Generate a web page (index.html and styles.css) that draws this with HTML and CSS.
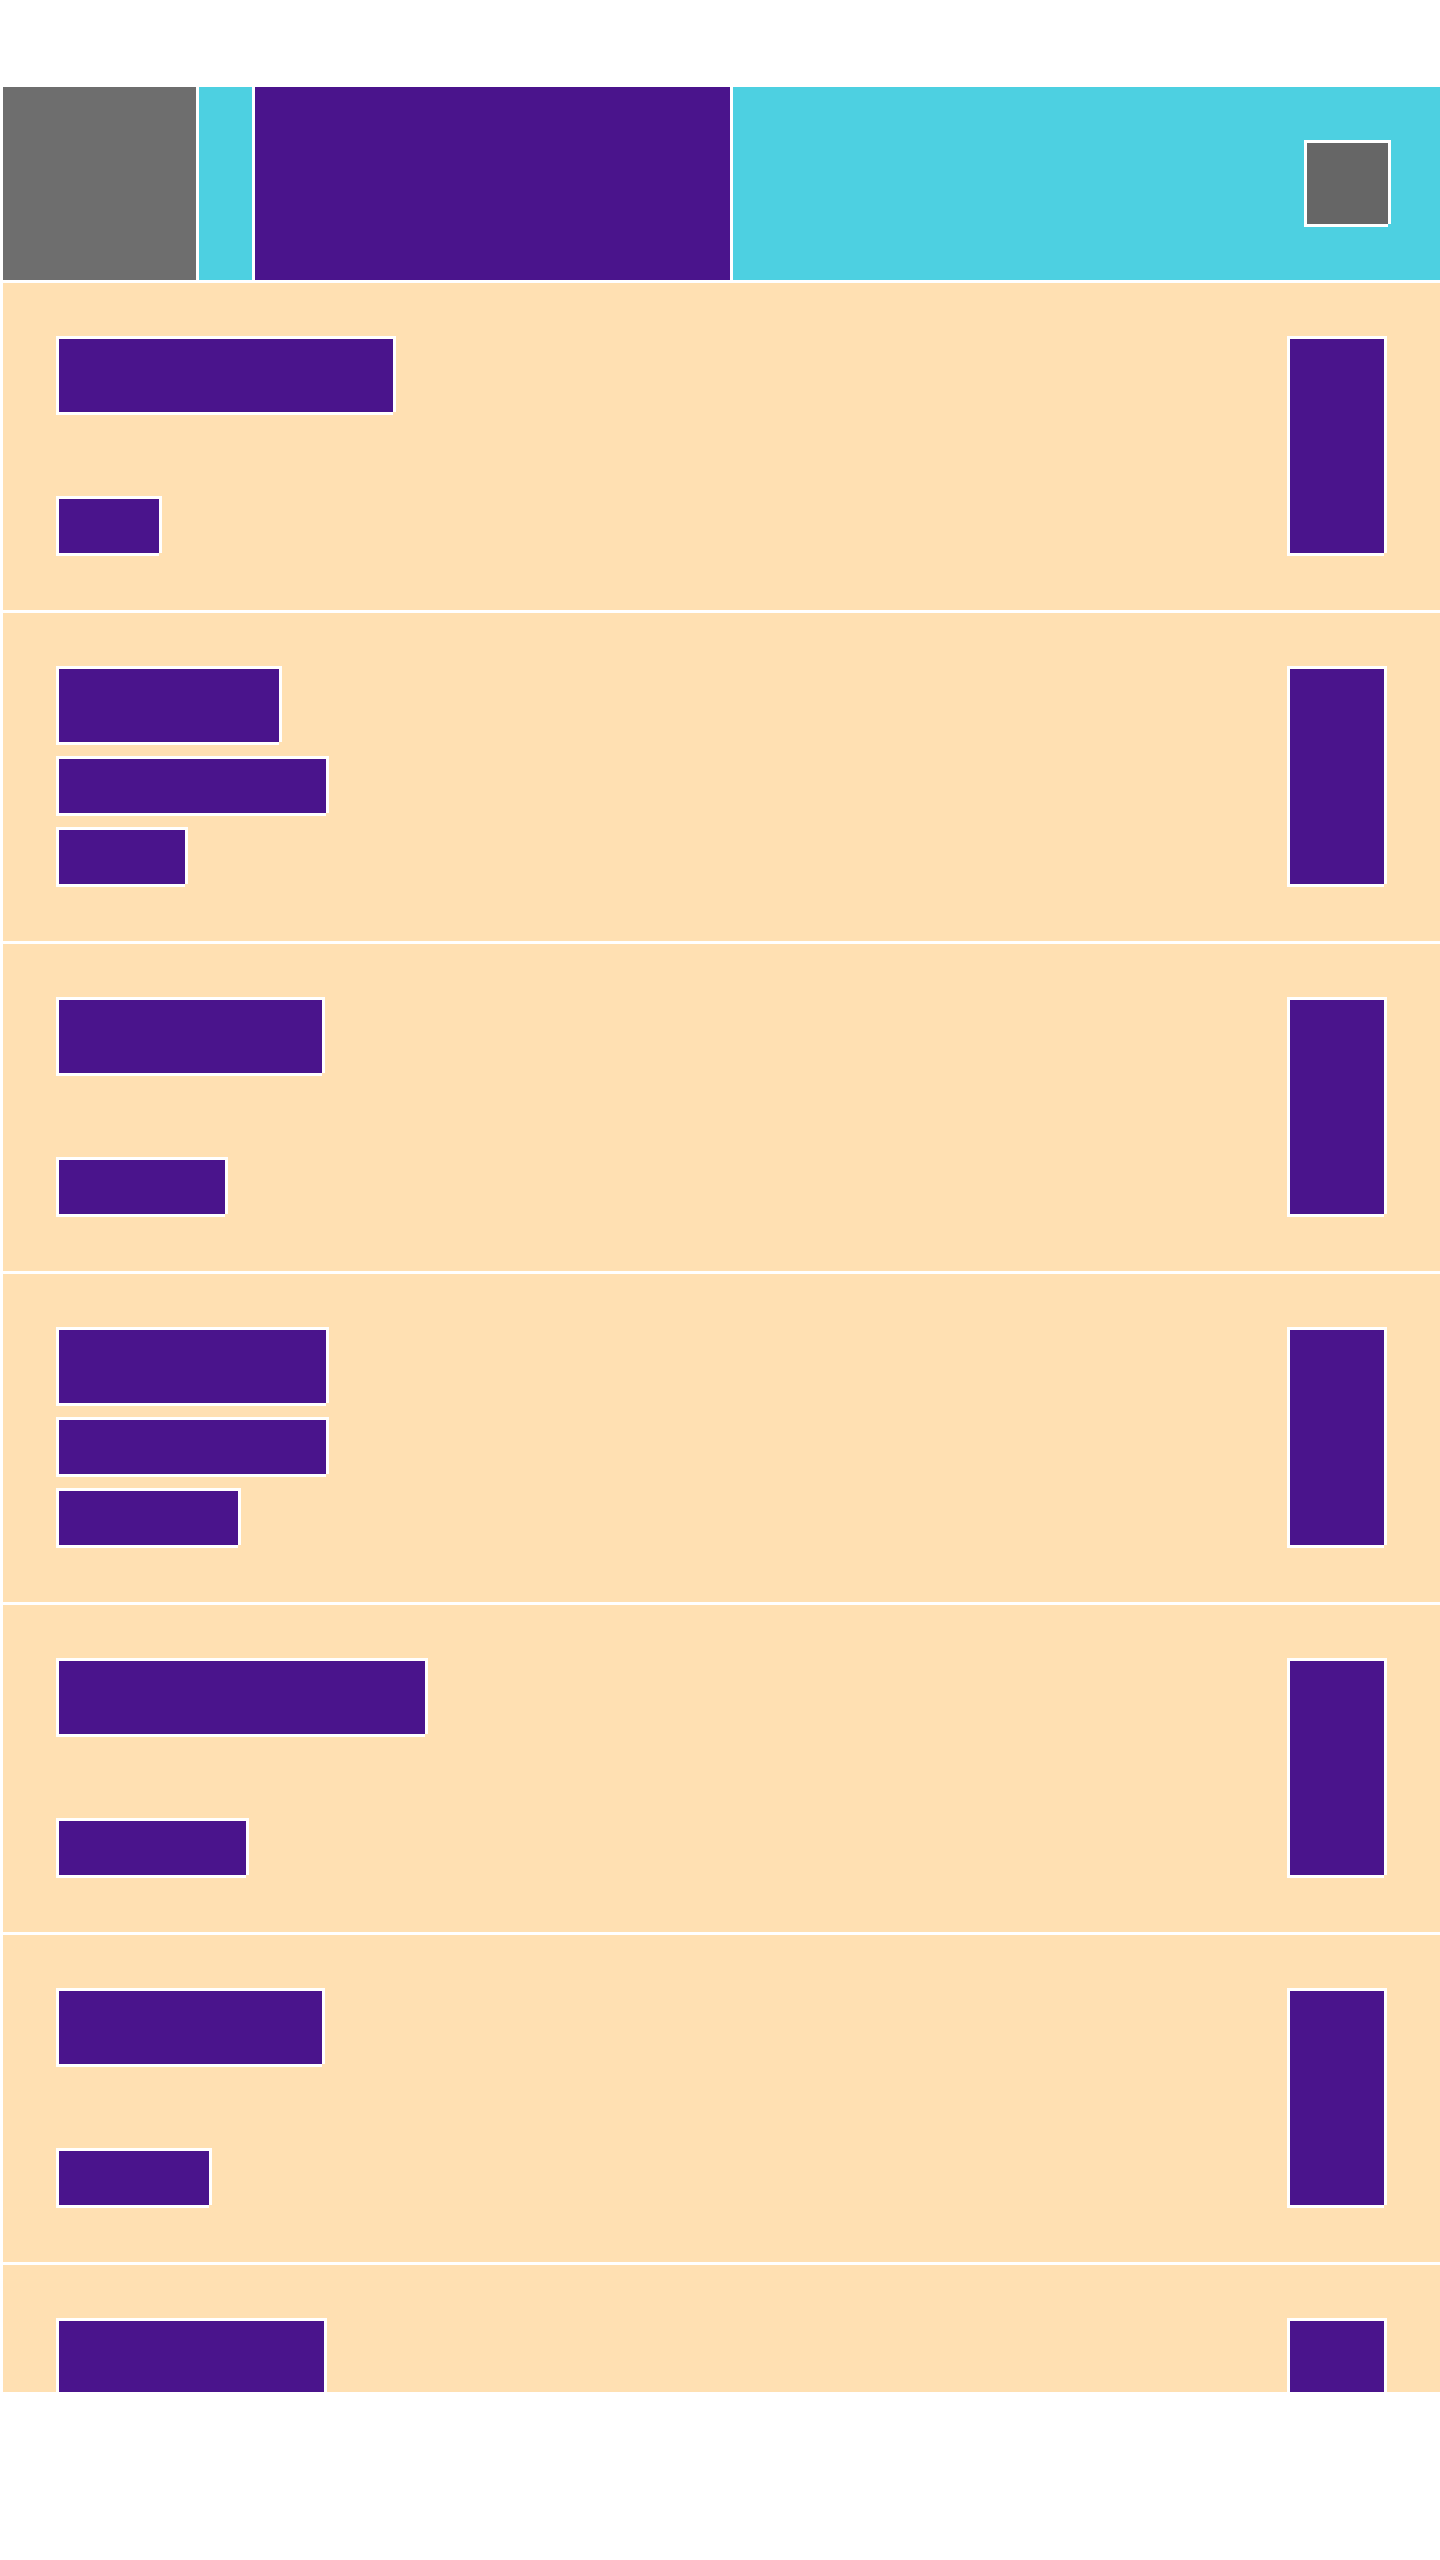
FILE: index.html
```html
<!DOCTYPE html>
<html lang="en">
<head>
  <meta charset="utf-8">
  <meta name="viewport" content="width=device-width, initial-scale=1">
  <title>List</title>
  <link rel="stylesheet" href="styles.css">
</head>
<body>
  <div class="screen">
    <header class="toolbar">
      <button class="toolbar-nav" type="button" aria-label="Back"></button>
      <div class="toolbar-title"></div>
      <button class="toolbar-action block" type="button" aria-label="Search"></button>
    </header>
    <main class="list">
      <article class="row">
        <div class="row-text">
          <div class="block title" style="width: 340px"></div>
          <div class="block line" style="width: 106px"></div>
        </div>
        <div class="block side"></div>
      </article>
      <article class="row">
        <div class="row-text">
          <div class="block title" style="width: 226px"></div>
          <div class="block line" style="width: 273px"></div>
          <div class="block line" style="width: 132px"></div>
        </div>
        <div class="block side"></div>
      </article>
      <article class="row">
        <div class="row-text">
          <div class="block title" style="width: 269px"></div>
          <div class="block line" style="width: 172px"></div>
        </div>
        <div class="block side"></div>
      </article>
      <article class="row">
        <div class="row-text">
          <div class="block title" style="width: 273px"></div>
          <div class="block line" style="width: 273px"></div>
          <div class="block line" style="width: 185px"></div>
        </div>
        <div class="block side"></div>
      </article>
      <article class="row">
        <div class="row-text">
          <div class="block title" style="width: 372px"></div>
          <div class="block line" style="width: 193px"></div>
        </div>
        <div class="block side"></div>
      </article>
      <article class="row">
        <div class="row-text">
          <div class="block title" style="width: 269px"></div>
          <div class="block line" style="width: 156px"></div>
        </div>
        <div class="block side"></div>
      </article>
      <article class="row">
        <div class="row-text">
          <div class="block title" style="width: 271px"></div>
          <div class="block line" style="width: 156px"></div>
        </div>
        <div class="block side"></div>
      </article>
    </main>
  </div>
</body>
</html>
```
FILE: styles.css
```css
:root {
  --line: 3px;
  --cyan: #4dd0e1;
  --purple: #4a148c;
  --sand: #ffe0b2;
}

* {
  box-sizing: border-box;
}

body {
  margin: 0;
  background: #fff;
  font-family: Roboto, sans-serif;
}

button {
  margin: 0;
  padding: 0;
  border: 0;
  border-radius: 0;
}

.screen {
  display: flex;
  flex-direction: column;
  height: 100vh;
  padding: 87px 0 168px var(--line);
}

.toolbar {
  display: flex;
  flex: none;
  align-items: center;
  height: 196px;
  padding-right: 49px;
  border-bottom: var(--line) solid #fff;
  background: var(--cyan);
}

.toolbar-nav {
  align-self: stretch;
  width: 196px;
  border-right: var(--line) solid #fff;
  background: #6e6e6e;
}

.toolbar-title {
  align-self: stretch;
  width: 481px;
  margin-left: 53px;
  border: solid #fff;
  border-width: 0 var(--line);
  background: var(--purple);
}

/* Outlined block; the outline is open at its bottom right corner. */
.block {
  border: var(--line) solid #fff;
  background: var(--purple);
  clip-path: polygon(
    0 0,
    100% 0,
    100% calc(100% - var(--line)),
    calc(100% - var(--line)) calc(100% - var(--line)),
    calc(100% - var(--line)) 100%,
    0 100%
  );
}

.toolbar-action {
  width: 87px;
  height: 87px;
  margin-left: auto;
  background: #666;
}

.list {
  flex: 1;
  min-height: 0;
  overflow: hidden;
}

.row {
  display: flex;
  justify-content: space-between;
  padding: 53px 53px 54px;
  border-bottom: var(--line) solid #fff;
  background: var(--sand);
}

.row-text {
  display: flex;
  flex-direction: column;
  justify-content: space-between;
  gap: 11px;
  min-height: 220px;
}

.title {
  height: 79px;
}

.line {
  height: 60px;
}

.side {
  width: 100px;
}
```
